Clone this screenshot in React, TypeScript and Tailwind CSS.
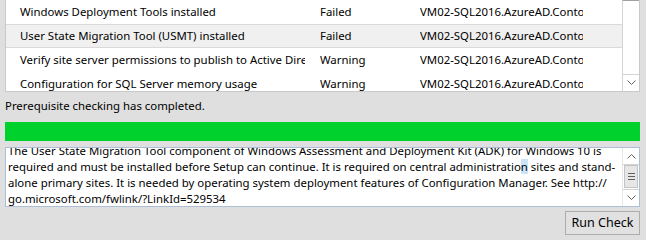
import React from "react";

interface CheckRow {
  item: string;
  status: string;
  server: string;
  selected?: boolean;
}

const rows: CheckRow[] = [
  { item: "Windows Deployment Tools installed", status: "Failed", server: "VM02-SQL2016.AzureAD.Contoso" },
  { item: "User State Migration Tool (USMT) installed", status: "Failed", server: "VM02-SQL2016.AzureAD.Contoso", selected: true },
  { item: "Verify site server permissions to publish to Active Directory", status: "Warning", server: "VM02-SQL2016.AzureAD.Contoso" },
  { item: "Configuration for SQL Server memory usage", status: "Warning", server: "VM02-SQL2016.AzureAD.Contoso" },
];

const Chevron = ({ up }: { up?: boolean }) => (
  <svg width="9" height="6" viewBox="0 0 9 6" className={up ? "rotate-180" : ""}>
    <path d="M0.5 0.5 L4.5 4.5 L8.5 0.5" fill="none" stroke="#606060" strokeWidth="1" />
  </svg>
);

export default function App() {
  return (
    <div
      className="w-[646px] h-[240px] overflow-hidden bg-[#dfdfdf] pl-[5px] pr-[6px] flex flex-col text-[11.4px] text-black"
      style={{ fontFamily: '"Noto Sans", "Segoe UI", sans-serif' }}
    >
      {/* RESULTS LIST */}
      <div className="h-[92px] flex bg-white border border-t-0 border-[#c9c9c9] shrink-0">
        <div className="flex-1 overflow-hidden">
          {rows.map((r, i) => (
            <div
              key={i}
              className={`h-[24px] flex items-center whitespace-nowrap ${
                r.selected ? "bg-[#f0f0f0] border-y border-[#dadada]" : ""
              }`}
            >
              <div className="w-[299px] pl-[14px] overflow-hidden">{r.item}</div>
              <div className="ml-[15px] w-[100px] overflow-hidden">{r.status}</div>
              <div className="w-[163px] overflow-hidden">{r.server}</div>
            </div>
          ))}
        </div>
        <div className="w-[17px] flex flex-col border-l border-[#d4d4d4] border-t border-t-[#a0a0a0]">
          <div className="flex-1" />
          <div className="h-[17px] border-t border-[#d4d4d4] flex items-center justify-center">
            <Chevron />
          </div>
        </div>
      </div>

      {/* STATUS */}
      <div className="mt-[6px] leading-[16px] whitespace-nowrap">Prerequisite checking has completed.</div>

      {/* PROGRESS */}
      <div className="mt-[8px] h-[19px] bg-[#00d12c] shrink-0" />

      {/* DETAILS */}
      <div className="mt-[6px] h-[60px] flex bg-white border border-[#abc0d6] shrink-0">
        <div className="flex-1 overflow-hidden pl-[2px]">
          <div className="-mt-[5px] leading-[16px] whitespace-nowrap">
            <div>The User State Migration Tool component of Windows Assessment and Deployment Kit (ADK) for Windows 10 is</div>
            <div>
              required and must be installed before Setup can continue. It is required on central administratio
              <span className="bg-[#cce4f7]">n</span> sites and stand-
            </div>
            <div>alone primary sites. It is needed by operating system deployment features of Configuration Manager. See http://</div>
            <div>go.microsoft.com/fwlink/?LinkId=529534</div>
          </div>
        </div>
        <div className="w-[17px] flex flex-col border-l border-[#e6e6e6] bg-white">
          <div className="h-[17px] flex items-center justify-center border-b border-[#d4d4d4]">
            <Chevron up />
          </div>
          <div className="h-[23px] mx-[1px] bg-[#e6e6e6] border border-[#c4c4c4] flex flex-col items-center justify-center gap-[2px]">
            <div className="w-[7px] h-px bg-[#606060]" />
            <div className="w-[7px] h-px bg-[#606060]" />
            <div className="w-[7px] h-px bg-[#606060]" />
          </div>
          <div className="flex-1" />
          <div className="h-[17px] flex items-center justify-center border-t border-[#d4d4d4]">
            <Chevron />
          </div>
        </div>
      </div>

      {/* ACTIONS */}
      <div className="mt-[4px] flex justify-end">
        <button className="w-[75px] h-[24px] border border-[#adadad] bg-[#e1e1e1] text-[12.5px] leading-none">
          Run Check
        </button>
      </div>
    </div>
  );
}
